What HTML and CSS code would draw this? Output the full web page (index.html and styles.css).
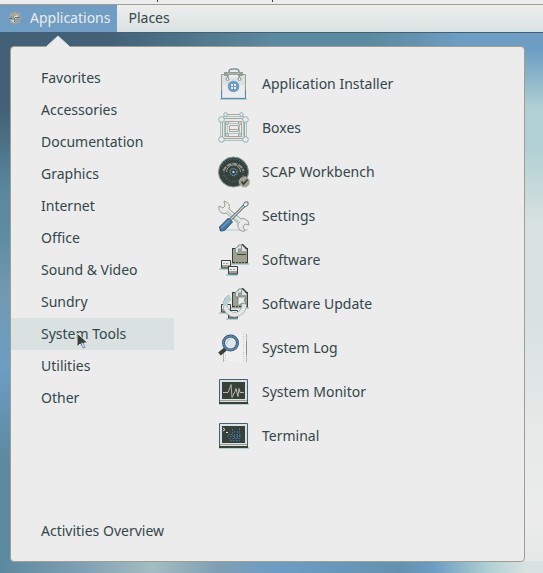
FILE: index.html
```html
<!DOCTYPE html>
<html lang="en">
<head>
<meta charset="utf-8">
<meta name="viewport" content="width=device-width, initial-scale=1">
<title>Applications</title>
<link rel="stylesheet" href="styles.css">
</head>
<body>
<div class="strip"><i class="tail"></i><i class="tail"></i></div>
<nav class="topbar" aria-label="Top bar">
  <button class="topbar-item is-open" type="button" aria-expanded="true">
    <svg class="logo" viewBox="0 0 14 14" aria-hidden="true">
      <path fill="#a9a597" d="M7 0l2 2h3v3l2 2-2 2v3H9l-2 2-2-2H2V9L0 7l2-2V2h3z"/>
      <path fill="#6f9dc3" d="M3 5l3 1-1 2-2 0zM8 8l4 1-2 2z"/>
      <path fill="#d9e2e1" d="M6 6l3-2 1 2-3 2zM3 9h3v3z"/>
      <path fill="#5b7280" d="M7 6h5v1H7zM6 7h1v4H6zM1 7h3v1H1z"/>
    </svg>
    <span>Applications</span>
  </button>
  <button class="topbar-item" type="button">Places</button>
</nav>
<main class="desktop">
  <section class="menu" aria-label="Applications menu">
    <svg class="arrow" viewBox="0 0 24 12" aria-hidden="true"><path fill="#ececec" d="M0 12L12 1l12 11z"/><path fill="none" stroke="#d9e2e1" d="M1 11L12 1l11 10"/></svg>
    <div class="categories">
      <ul class="category-list">
        <li><a href="#">Favorites</a></li>
        <li><a href="#">Accessories</a></li>
        <li><a href="#">Documentation</a></li>
        <li><a href="#">Graphics</a></li>
        <li><a href="#">Internet</a></li>
        <li><a href="#">Office</a></li>
        <li><a href="#">Sound &amp; Video</a></li>
        <li><a href="#">Sundry</a></li>
        <li><a class="is-current" href="#">System Tools
          <svg class="pointer" viewBox="0 0 13 18" aria-hidden="true"><path fill="#36413a" stroke="#ececec" d="M1 1v14l3-3 3 5 3-1-2-5h4z"/><path fill="#d9e2e1" stroke="#6f9dc3" stroke-width=".6" d="M5 11l2 5 2-1-2-4z"/></svg></a></li>
        <li><a href="#">Utilities</a></li>
        <li><a href="#">Other</a></li>
      </ul>
      <a class="overview" href="#">Activities Overview</a>
    </div>
    <ul class="apps">
      <li><a href="#">
        <svg viewBox="0 0 32 32" aria-hidden="true">
          <path fill="#b0d0d3" d="M2 30h27v2H2z"/>
          <path fill="#d9e2e1" stroke="#a09e8e" d="M3.500 6.500h24v24h-24z"/>
          <path fill="#ececec" d="M5 17h21v12H5z"/>
          <path fill="#9b9b90" d="M6 4h19v4H6z"/><path fill="#ececec" d="M10 5h11v5H10z"/>
          <path fill="none" stroke="#809895" stroke-width="1.500" d="M11 4q0-3 3-3h4q3 0 3 3M10 11q-1-5 2-5h7q3 0 2 5"/>
          <circle cx="9.500" cy="11" r="1.500" fill="#ececec" stroke="#809895"/><circle cx="21.500" cy="11" r="1.500" fill="#ececec" stroke="#809895"/>
          <path stroke="#5b89ad" d="M3.500 22v8.500h24V22" fill="none"/>
          <circle cx="15.500" cy="18.500" r="5.800" fill="#6d9dc3"/>
          <path fill="#ececec" d="M13 16h2v2h-2zM16 16h2v2h-2zM13 19h2v2h-2zM16 19h2v2h-2z"/>
        </svg><span>Application Installer</span></a></li>
      <li><a href="#">
        <svg viewBox="0 0 32 32" aria-hidden="true">
          <path fill="#e3e9e8" fill-rule="evenodd" d="M2 5h27v24H2zM7 9v16h17V9z"/>
          <g fill="none" stroke="#a9a597"><path d="M4.500 6.500h22v20h-22zM8.500 2.500h15M7.500 9.500h16v15h-16zM11.500 13.500h9v6h-9zM12 17.500h9"/></g>
          <g fill="none" stroke="#a3c6ca"><path d="M2.500 8v18M28.500 8v18M5 28.500h21M5 4.500h21M6.500 9v15M25.500 9v15M9.500 11.500h12v10h-12z"/><path d="M4 7l4-4M27 7l-4-4M4 27l6-6M27 27l-6-6"/></g>
          <g fill="#ececec" stroke="#8fb0b2"><circle cx="3.500" cy="7.500" r="2.800"/><circle cx="27.500" cy="7.500" r="2.800"/><circle cx="3.500" cy="27.500" r="2.800"/><circle cx="27.500" cy="27.500" r="2.800"/><circle cx="7.500" cy="2.500" r="1.800"/><circle cx="23.500" cy="2.500" r="1.800"/></g>
          <g fill="#d9e2e1" stroke="#a9a597"><circle cx="9" cy="11" r="1.500"/><circle cx="22" cy="11" r="1.500"/><circle cx="9" cy="23" r="1.500"/><circle cx="22" cy="23" r="1.500"/></g>
        </svg><span>Boxes</span></a></li>
      <li><a href="#">
        <svg viewBox="0 0 32 32" aria-hidden="true">
          <circle cx="15.500" cy="16" r="15" fill="#36413a" stroke="#809895"/>
          <path fill="none" stroke="#8c9089" stroke-width="2" stroke-dasharray="5 1" d="M5.500 15a10.500 10.500 0 0 1 20 0"/>
          <path fill="none" stroke="#a09e8e" d="M8.500 16a7 7 0 0 1 14 0"/>
          <path fill="none" stroke="#426f94" stroke-width="1.500" stroke-dasharray="1 2" d="M7 20a10 10 0 0 0 16 3M3.500 11a13 13 0 0 1 24 0M6 16v5M25 16v4"/>
          <circle cx="15.500" cy="16" r="3.500" fill="none" stroke="#6d9dc3" stroke-width="1.500" stroke-dasharray="1 1"/><circle cx="15.500" cy="16" r="1.200" fill="#b0d0d3"/>
          <circle cx="26.500" cy="26" r="5.300" fill="#a09e8e" stroke="#c5c5bc" stroke-width=".6"/><path fill="none" stroke="#36413a" stroke-width="1.800" d="M23.500 25.500l2 2.500 4-4.500"/>
        </svg><span>SCAP Workbench</span></a></li>
      <li><a href="#">
        <svg viewBox="0 0 32 32" aria-hidden="true">
          <path fill="#c9dddd" d="M1 29h29v2H1z"/>
          <path fill="#e6eae9" stroke="#a09e8e" d="M6 1l1 5-2 2-4-2q-1 5 3 7 2 1 4 0l12 10q-1 5 2 7 2 2 5 1l-2-4 2-3 4 1q0-5-4-6-2-1-4 0L11 9q2-6-5-8z"/>
          <path fill="none" stroke="#b0d0d3" stroke-width="1.500" d="M9 11l13 12"/>
          <path fill="none" stroke="#4e5d60" stroke-width="3" d="M12 20L26 6"/><path fill="none" stroke="#c4d8da" stroke-width="1.500" d="M12 20L26 6"/>
          <path fill="#ececec" stroke="#5b7280" d="M25 5l2-3 3 0 0 3-3 2z"/>
          <path fill="#4579a6" stroke="#36506b" d="M1.500 27l9-9 4 4-8 8.500-4 .5z"/><path fill="none" stroke="#6d9dc3" stroke-width="1.500" d="M3.500 28l8-8"/>
        </svg><span>Settings</span></a></li>
      <li><a href="#">
        <svg viewBox="0 0 32 32" aria-hidden="true">
          <g id="packages">
            <path fill="#b0d0d3" d="M13 19h18v2H13zM1 24h10v2H1zM8 30h12v2H8z"/>
            <path fill="#a09e8e" d="M14 4h16v16H14z"/>
            <path fill="none" stroke="#36413a" d="M15 4.500h3M14.500 4v15M29.500 4v15"/><path stroke="#36413a" stroke-dasharray="2 1" d="M15 18.500h15"/>
            <path fill="#dfe4e2" stroke="#809895" d="M17.500 8.500v-4q1-2 3-2V1h3v4h-3v4z"/>
            <path fill="#dfe4e2" d="M24 1l5 6h-5z"/><path stroke="#36413a" stroke-width="1.500" d="M24 0l5 5"/>
            <path stroke="#36413a" d="M19 10.500h9"/>
            <path fill="#a09e8e" stroke="#36413a" d="M3.500 16.500h9v7.500h-9zM10.500 22.500h9v7.500h-9z"/>
            <path fill="#ececec" d="M4 17h8v4H4zM11 23h8v4h-8z"/><path stroke="#a09e8e" stroke-dasharray="2 1" d="M5 19.500h6M12 25.500h6"/>
          </g>
        </svg><span>Software</span></a></li>
      <li><a href="#">
        <svg viewBox="0 0 32 32" aria-hidden="true">
          <use href="#packages"/>
          <path fill="none" stroke="#809895" stroke-width="5" d="M12 9a9.500 9.500 0 1 0 14 6"/>
          <path fill="none" stroke="#e2e6e4" stroke-width="4" d="M12 9a9.500 9.500 0 1 0 14 6"/>
          <path fill="none" stroke="#b0d0d3" stroke-width="3" d="M12 9a9.500 9.500 0 0 0-5 9"/>
          <path fill="#ececec" stroke="#809895" d="M20 18V9h8l-2 3 2 4-4-1z"/>
        </svg><span>Software Update</span></a></li>
      <li><a href="#">
        <svg viewBox="0 0 32 32" aria-hidden="true">
          <path fill="#f0f1ef" d="M6 2h23v28H6z"/><path stroke="#b9b5a8" d="M5.500 20v10M28.500 2v28"/><path stroke="#8c9089" d="M28.500 9v14"/>
          <path fill="none" stroke="#b0d0d3" stroke-dasharray="1 1" d="M25.500 2v28M7.500 22v8M7.500 2v3"/>
          <path stroke="#36413a" stroke-width="4" d="M1.500 22l6-5"/>
          <circle cx="12.500" cy="11" r="7" fill="#dce8ee" stroke="#36506b" stroke-width="3"/><circle cx="12.500" cy="11" r="7" fill="none" stroke="#5b89ad" stroke-width="1.500"/>
          <path fill="none" stroke="#b0d0d3" d="M8.500 12q0-4 4-5"/>
        </svg><span>System Log</span></a></li>
      <li><a href="#">
        <svg viewBox="0 0 32 32" aria-hidden="true">
          <g id="screen"><path fill="#b0d0d3" d="M1 27h30v2H1z"/><path fill="#d9e2e1" stroke="#426177" d="M1.500 3.500h28v23h-28z"/><path fill="#a09e8e" d="M2 24h27v1H2z"/><path fill="#36413a" d="M4 6h23v17H4zM1 26h29v2H1z"/></g>
          <path fill="none" stroke="#b9b5a8" d="M5 16.500h5l2-5 1-3 1 13 3-6 1-3 2 8 1-8 1 4h4"/>
        </svg><span>System Monitor</span></a></li>
      <li><a href="#">
        <svg viewBox="0 0 32 32" aria-hidden="true">
          <use href="#screen"/><path fill="none" stroke="#d9e2e1" d="M5 8l2 1.500L5 11M8 12.500h2"/>
          <path fill="none" stroke="#3f6b94" stroke-dasharray="2 1" d="M14.500 9v7M16.500 11v7M21.500 8v8M19.500 11v7M10 14.500h4M18 14.500h6M9 16.500h14M11 18.500h12M12 20.500h10"/>
        </svg><span>Terminal</span></a></li>
    </ul>
  </section>
</main>
</body>
</html>
```
FILE: styles.css
```css
* { box-sizing: border-box; }

body {
  display: flex;
  flex-direction: column;
  min-height: 100vh;
  margin: 0;
  background: #5b89ad;
  color: #33474a;
  font: 14px/20px "Noto Sans", "Open Sans", sans-serif;
}

ul { margin: 0; padding: 0; list-style: none; }
a { color: inherit; text-decoration: none; }
svg { display: block; flex: none; }

.strip {
  display: flex;
  gap: 114px;
  height: 5px;
  padding-left: 157px;
  border-bottom: 1px solid #a09e8e;
  background: #ececec;
}

.tail { width: 1px; height: 2px; background: #36413a; }

.topbar {
  display: flex;
  height: 28px;
  border-bottom: 1px solid #426177;
  background: linear-gradient(#ececec 10%, #d9e2e1);
}

.topbar-item {
  display: flex;
  align-items: center;
  gap: 8px;
  padding: 0 11px 2px;
  border: 0;
  background: none;
  color: inherit;
  font: inherit;
}

.topbar-item.is-open {
  padding: 0 7px 2px 8px;
  background: #6f9dc3;
  color: #ececec;
}

.logo { width: 14px; height: 14px; }

.desktop {
  display: flex;
  flex: 1;
  padding: 13px 18px 11px 10px;
  background:
    linear-gradient(90deg, #426177 20%, #5b899f 50%, #5b899f 68%, #6d9dc3 85%) top / 100% 14px no-repeat,
    linear-gradient(90deg, #5b899f, #7f9fb4 15%, #a3bdc0 28%, #7f9fb4 40%, #6d9dc3 50%, #6392b0 74%, #6d9dc3 80%, #b0d0d3 90%, #d9e2e1 97%) bottom / 100% 12px no-repeat,
    linear-gradient(#426177 14%, #5b899f 30%, #5b899f 35%, #7299b2 48%, #6d9dc3 62%, #5b899f 80%) left / 11px 100% no-repeat,
    linear-gradient(#6d9dc3 3%, #b0d0d3 14%, #b0d0d3 21%, #d9e2e1 36%, #d9e2e1 52%, #e6eae9 75%, #ececec 90%, #e2e7e6) right / 19px 100% no-repeat;
}

.menu {
  position: relative;
  display: grid;
  grid-template-columns: 163px 1fr;
  column-gap: 44px;
  flex: 1;
  border: 1px solid #a09e8e;
  border-radius: 4px;
  background: #ececec;
}

.arrow { position: absolute; top: -12px; left: 35px; width: 24px; height: 12px; }

.categories {
  display: flex;
  flex-direction: column;
  justify-content: space-between;
  padding: 15px 0 14px;
}

.categories a {
  display: block;
  padding: 6px 0 6px 30px;
}

.categories .is-current { position: relative; background: #d9e2e1; }
.categories .overview { white-space: nowrap; }

.pointer { position: absolute; top: 14px; left: 65px; width: 13px; height: 18px; }

.apps { padding: 15px 0; }

.apps a {
  display: flex;
  align-items: center;
  gap: 12px;
  height: 44px;
}

.apps svg { width: 32px; height: 32px; }
```
